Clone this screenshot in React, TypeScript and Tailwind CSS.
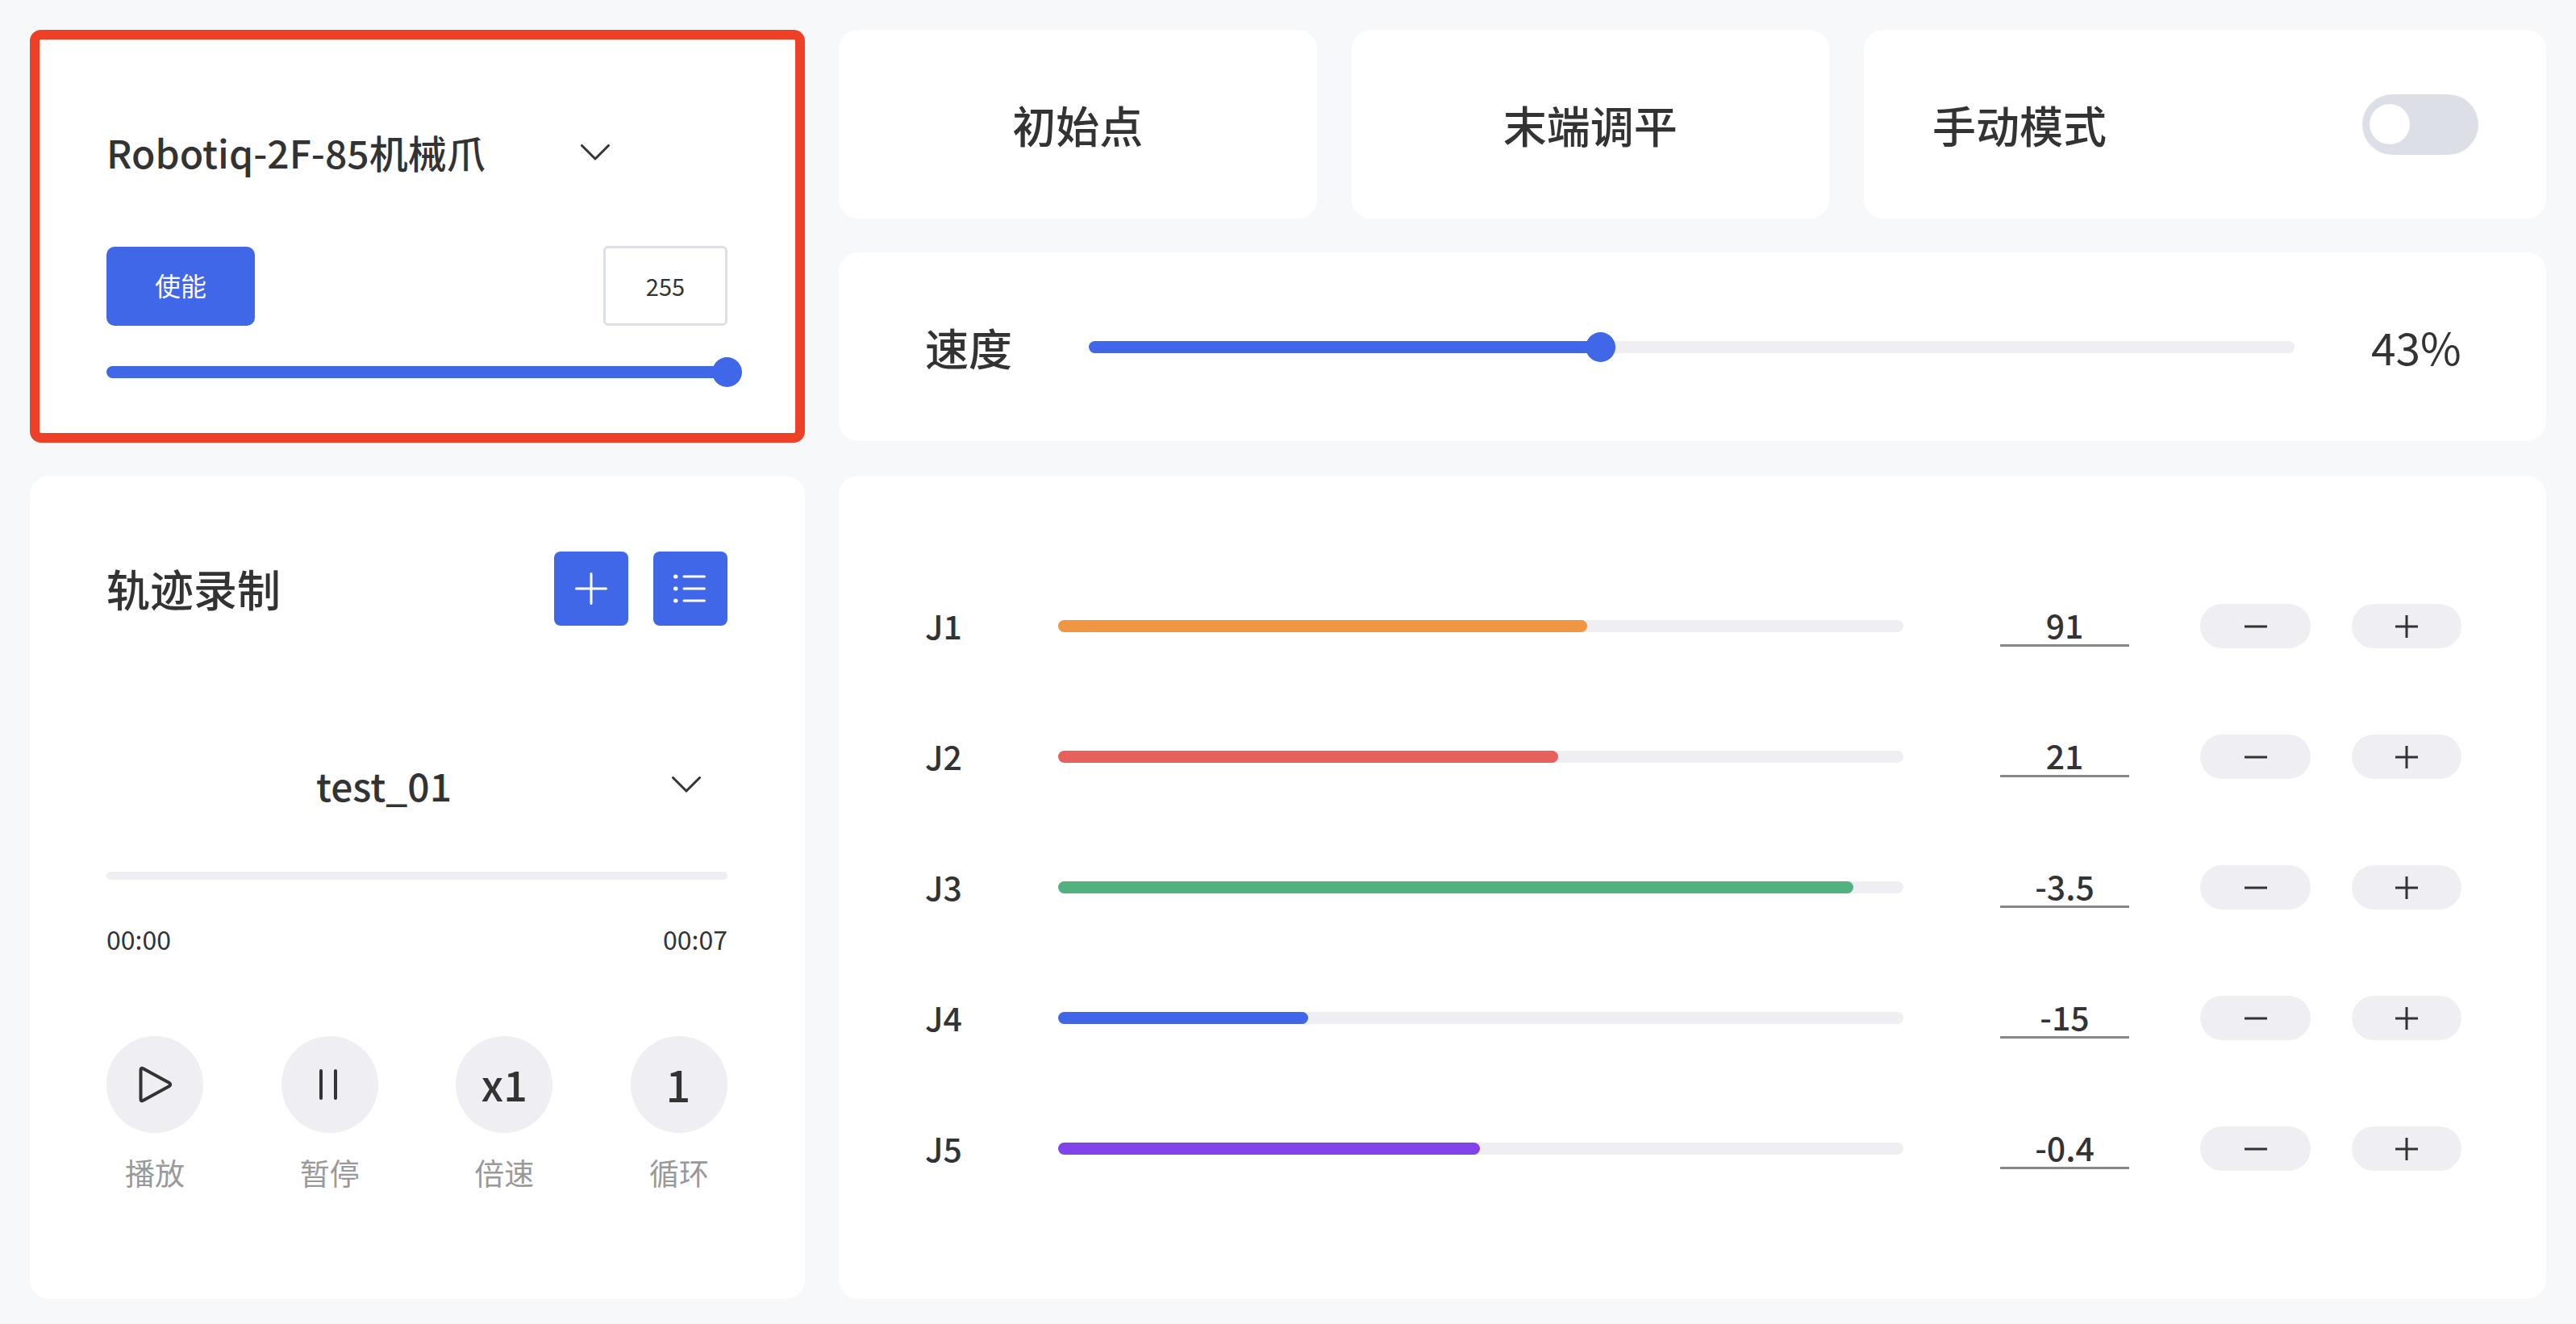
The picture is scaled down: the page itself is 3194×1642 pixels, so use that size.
const Chevron = ({ className }: { className: string }) => (
  <svg viewBox="0 0 36 20" fill="none" className={className}>
    <path d="M1.5 1.5 L18 18 L34.5 1.5" stroke="#333" strokeWidth="3" strokeLinecap="round" strokeLinejoin="round" />
  </svg>
);

const joints = [
  { name: "J1", value: "91", pct: 62.6, color: "bg-[#f09540]" },
  { name: "J2", value: "21", pct: 59.2, color: "bg-[#e8605c]" },
  { name: "J3", value: "-3.5", pct: 94.1, color: "bg-[#52b27f]" },
  { name: "J4", value: "-15", pct: 29.6, color: "bg-[#4067e7]" },
  { name: "J5", value: "-0.4", pct: 49.9, color: "bg-[#8143ea]" },
];

function PlainCard({ label }: { label: string }) {
  return (
    <div className="flex-1 h-[234px] bg-white rounded-[24px] flex items-center justify-center text-[54px] leading-[60px] font-medium text-[#333]">
      <span className="mt-[2px]">{label}</span>
    </div>
  );
}

function RoundControl({ label, children }: { label: string; children: React.ReactNode }) {
  return (
    <div className="w-[120px] flex flex-col items-center">
      <div className="w-[120px] h-[120px] rounded-full bg-[#eeeef3] flex items-center justify-center text-[#333]">
        {children}
      </div>
      <div className="mt-[24px] h-[50px] leading-[50px] text-[37px] text-[#999]">{label}</div>
    </div>
  );
}

export default function App() {
  return (
    <div className="w-[3194px] h-[1642px] overflow-hidden bg-[#f7f8fa] pt-[37px] pl-[37px] font-['Noto_Sans_CJK_SC','Noto_Sans',sans-serif]">
      <div className="grid grid-cols-[961px_2117px] grid-rows-[512px_1021px] gap-x-[42px] gap-y-[41px]">
        {/* gripper */}
        <div className="bg-white rounded-[14px] border-[12px] border-[#ee4026] pt-[112px] pl-[83px] pr-[84px]">
          <div className="flex items-center h-[60px]">
            <span className="w-[588px] text-[48px] leading-[60px] font-medium text-[#333] -mt-[6px]">Robotiq-2F-85机械爪</span>
            <Chevron className="w-[36px] h-[20px] -mt-[5px]" />
          </div>
          <div className="flex items-center justify-between mt-[84px]">
            <button className="w-[184px] h-[98px] rounded-[10px] bg-[#4067e7] text-white text-[32px] pb-[4px]">使能</button>
            <div className="w-[154px] h-[99px] rounded-[6px] border-[3px] border-[#dcdfe6] flex items-center justify-center text-[29px] text-[#333]">
              255
            </div>
          </div>
          <div className="relative mt-[50px] h-[15px] rounded-full bg-[#4067e7]">
            <div className="absolute -right-[18px] -top-[11px] w-[37px] h-[37px] rounded-full bg-[#4067e7]" />
          </div>
        </div>

        {/* top right */}
        <div className="flex flex-col gap-[42px]">
          <div className="flex gap-[43px]">
            <PlainCard label="初始点" />
            <PlainCard label="末端调平" />
            <div className="w-[846px] h-[234px] bg-white rounded-[24px] flex items-center justify-between pl-[85px] pr-[84px]">
              <span className="text-[54px] leading-[60px] font-medium text-[#333] mt-[2px]">手动模式</span>
              <div className="w-[144px] h-[75px] rounded-full bg-[#dcdfe6] flex items-center pl-[9px]">
                <div className="w-[50px] h-[50px] rounded-full bg-white" />
              </div>
            </div>
          </div>
          <div className="h-[234px] bg-white rounded-[24px] flex items-center pl-[107px]">
            <span className="w-[203px] text-[54px] leading-[60px] font-medium text-[#333] mt-[2px]">速度</span>
            <div className="relative w-[1495px] h-[15px] rounded-full bg-[#eeeef3]">
              <div className="h-full w-[42.4%] rounded-full bg-[#4067e7]" />
              <div className="absolute left-[42.4%] -top-[11px] -ml-[18px] w-[37px] h-[37px] rounded-full bg-[#4067e7]" />
            </div>
            <span className="ml-[95px] text-[55px] leading-[60px] text-[#333] -mt-[2px]">43%</span>
          </div>
        </div>

        {/* recording */}
        <div className="bg-white rounded-[24px] pt-[94px] pl-[95px] pr-[96px]">
          <div className="flex items-center justify-between">
            <span className="text-[54px] leading-[60px] font-medium text-[#333]">轨迹录制</span>
            <div className="flex gap-[31px]">
              <button className="w-[92px] h-[92px] rounded-[8px] bg-[#4067e7] flex items-center justify-center">
                <svg viewBox="0 0 40 40" className="w-[40px] h-[40px]" fill="none" stroke="#fff" strokeWidth="3" strokeLinecap="round">
                  <path d="M1.5 20 H38.5 M20 1.5 V38.5" />
                </svg>
              </button>
              <button className="w-[92px] h-[92px] rounded-[8px] bg-[#4067e7] flex items-center justify-center">
                <svg viewBox="0 0 40 36" className="w-[40px] h-[36px] -ml-[3px]" fill="none" stroke="#fff" strokeWidth="3" strokeLinecap="round">
                  <path d="M13 3 H38.5 M13 18 H38.5 M13 33 H38.5" />
                  <path d="M2.5 3 H3 M2.5 18 H3 M2.5 33 H3" strokeWidth="5" />
                </svg>
              </button>
            </div>
          </div>

          <div className="flex items-center h-[60px] mt-[171px]">
            <span className="w-[688px] text-center text-[48px] leading-[60px] font-medium text-[#333] -mt-[9px]">test_01</span>
            <Chevron className="w-[36px] h-[20px] ml-[13px] -mt-[8px]" />
          </div>

          <div className="h-[10px] rounded-full bg-[#eeeef3] mt-[74px]" />

          <div className="flex justify-between h-[44px] mt-[51px] text-[32px] leading-[44px] text-[#333]">
            <span>00:00</span>
            <span>00:07</span>
          </div>

          <div className="flex justify-between mt-[99px]">
            <RoundControl label="播放">
              <svg viewBox="0 0 42 46" className="w-[42px] h-[46px] ml-[2px]" fill="none" stroke="#333" strokeWidth="4" strokeLinejoin="round">
                <path d="M2.5 5 Q2.5 1.5 6 3.5 L38 21 Q40.5 23 38 25 L6 42.5 Q2.5 44.5 2.5 41 Z" />
              </svg>
            </RoundControl>
            <RoundControl label="暂停">
              <svg viewBox="0 0 24 38" className="w-[24px] h-[38px] -ml-[4px]" fill="none" stroke="#333" strokeWidth="4" strokeLinecap="round">
                <path d="M3 2 V36 M21 2 V36" />
              </svg>
            </RoundControl>
            <RoundControl label="倍速">
              <span className="text-[52px] leading-[60px] font-medium -mt-[2px]">x1</span>
            </RoundControl>
            <RoundControl label="循环">
              <span className="text-[54px] leading-[60px] font-medium -mt-[2px] -ml-[2px]">1</span>
            </RoundControl>
          </div>
        </div>

        {/* joints */}
        <div className="bg-white rounded-[24px] pt-[159px] pl-[107px] flex flex-col gap-[107px]">
          {joints.map((j) => (
            <div key={j.name} className="flex items-center h-[55px]">
              <span className="w-[165px] text-[41px] leading-[50px] font-medium text-[#333] -mt-[3px]">{j.name}</span>
              <div className="w-[1048px] h-[15px] rounded-full bg-[#eeeef3]">
                <div className={`h-full rounded-full ${j.color}`} style={{ width: `${j.pct}%` }} />
              </div>
              <div className="ml-[120px] w-[160px] h-[53px] self-start pt-[5px] border-b-[3px] border-[#888] text-center text-[41px] leading-[40px] font-medium text-[#333]">
                {j.value}
              </div>
              <button className="ml-[88px] w-[137px] h-[55px] rounded-full bg-[#eeeef3] flex items-center justify-center">
                <svg viewBox="0 0 28 4" className="w-[28px] h-[4px]" fill="none" stroke="#333" strokeWidth="3">
                  <path d="M0 2 H28" />
                </svg>
              </button>
              <button className="ml-[51px] w-[136px] h-[55px] rounded-full bg-[#eeeef3] flex items-center justify-center">
                <svg viewBox="0 0 28 28" className="w-[28px] h-[28px]" fill="none" stroke="#333" strokeWidth="3">
                  <path d="M0 14 H28 M14 0 V28" />
                </svg>
              </button>
            </div>
          ))}
        </div>
      </div>
    </div>
  );
}
